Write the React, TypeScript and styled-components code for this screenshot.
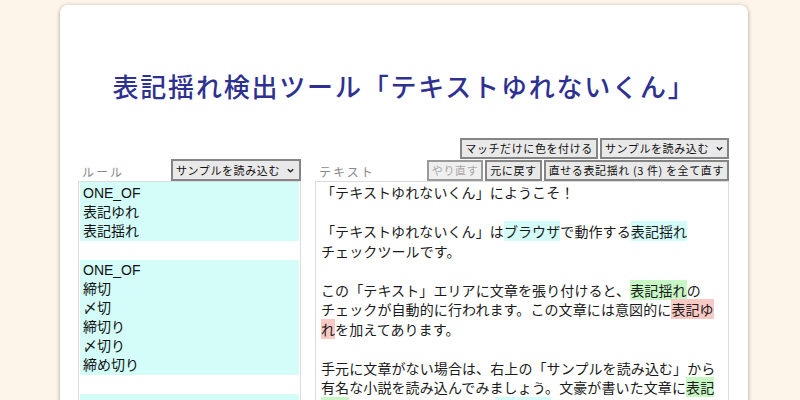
import React from "react";
import styled, { createGlobalStyle } from "styled-components";

const Global = createGlobalStyle`
  html, body { margin: 0; padding: 0; background: #fdf4ea; overflow: hidden; }
  body { font-family: "Liberation Sans", "Noto Sans CJK JP", sans-serif; }
`;

const Page = styled.div`
  padding-top: 5px;
  height: 395px;
  overflow: hidden;
`;

const Card = styled.div`
  margin-left: 60px;
  width: 688px;
  height: 420px;
  background: #fff;
  border-radius: 8px;
  box-shadow: 0 1px 4px rgba(0, 0, 0, 0.35);
`;

const Title = styled.h1`
  margin: 0;
  padding-top: 63px;
  text-align: center;
  font-family: "Noto Sans CJK JP", sans-serif;
  font-weight: 500;
  font-size: 26px;
  line-height: 36px;
  letter-spacing: 1.8px;
  color: #2e3192;
  padding-right: 0;
`;

const Columns = styled.div`
  display: grid;
  grid-template-columns: 223px 414px;
  column-gap: 14px;
  padding-left: 18px;
  margin-top: 34px;
`;

const Column = styled.div`
  display: flex;
  flex-direction: column;
`;

const Header = styled.div`
  height: 43px;
  display: flex;
  align-items: flex-end;
  justify-content: space-between;
`;

const Label = styled.span`
  font-family: "Noto Sans CJK JP", sans-serif;
  font-size: 12px;
  color: #8a8a8a;
  letter-spacing: 2px;
  padding: 0 0 0 4px;
  line-height: 18px;
`;

const ButtonStack = styled.div`
  display: flex;
  flex-direction: column;
  align-items: flex-end;
  gap: 1px;
`;

const ButtonRow = styled.div`
  display: flex;
  gap: 2px;
`;

const Button = styled.button<{ $disabled?: boolean }>`
  box-sizing: border-box;
  height: 21px;
  margin: 0;
  padding: 0 3px;
  font-family: "Noto Sans CJK JP", sans-serif;
  font-size: 11px;
  letter-spacing: 0.6px;
  line-height: 17px;
  color: ${(p) => (p.$disabled ? "#a8a8a8" : "#111")};
  background: ${(p) => (p.$disabled ? "#efefef" : "#e9e9e9")};
  border: 2px solid ${(p) => (p.$disabled ? "#9a9a9a" : "#858585")};
  display: flex;
  align-items: center;
  white-space: nowrap;
`;

const SelectBox = styled(Button)`
  height: 22px;
  padding: 0 4px 0 3px;
`;

const Chevron = () => (
  <svg width="9" height="9" viewBox="0 0 10 10" style={{ marginLeft: 6 }}>
    <path d="M2 3.5 L5 6.5 L8 3.5" fill="none" stroke="#222" strokeWidth="1.6" />
  </svg>
);

const RulesPanel = styled.div`
  box-sizing: border-box;
  height: 230px;
  border: 1px solid #dcdcdc;
  border-bottom: none;
  padding: 0 1px;
  font-size: 14px;
  color: #111;
`;

const RuleGroup = styled.div`
  background: #d4fcf8;
  padding: 1.5px 3px 0;
`;

const RuleLine = styled.div`
  line-height: 19px;
  height: 19px;
  white-space: nowrap;
`;

const Blank = styled.div`
  height: 19px;
`;

const TextPanel = styled.div`
  box-sizing: border-box;
  height: 230px;
  border: 1px solid #dcdcdc;
  border-bottom: none;
  padding: 1px 5px 0;
  font-family: "Noto Sans CJK JP", sans-serif;
  font-size: 14px;
  letter-spacing: 0.1px;
  color: #1a1a1a;
`;

const TextLine = styled.div`
  line-height: 19.5px;
  height: 19.5px;
  white-space: nowrap;
`;

const Mark = styled.span<{ $kind: "cyan" | "green" | "red" }>`
  background: ${(p) =>
    p.$kind === "cyan" ? "#d4fcf8" : p.$kind === "green" ? "#c8f7c5" : "#f9c9c3"};
`;

const rules: string[][] = [
  ["ONE_OF", "表記ゆれ", "表記揺れ"],
  ["ONE_OF", "締切", "〆切", "締切り", "〆切り", "締め切り"],
  ["ONE_OF", "見かけ", "見掛け"],
];

export default function App() {
  return (
    <>
      <Global />
      <Page>
        <Card>
          <Title>表記揺れ検出ツール「テキストゆれないくん」</Title>
          <Columns>
            <Column>
              <Header>
                <Label>ルール</Label>
                <SelectBox>
                  サンプルを読み込む
                  <Chevron />
                </SelectBox>
              </Header>
              <RulesPanel>
                {rules.map((g, i) => (
                  <React.Fragment key={i}>
                    {i > 0 && <Blank />}
                    <RuleGroup>
                      {g.map((l, j) => (
                        <RuleLine key={j}>{l}</RuleLine>
                      ))}
                    </RuleGroup>
                  </React.Fragment>
                ))}
              </RulesPanel>
            </Column>
            <Column>
              <Header>
                <Label>テキスト</Label>
                <ButtonStack>
                  <ButtonRow>
                    <Button>マッチだけに色を付ける</Button>
                    <Button>
                      サンプルを読み込む
                      <Chevron />
                    </Button>
                  </ButtonRow>
                  <ButtonRow>
                    <Button $disabled>やり直す</Button>
                    <Button>元に戻す</Button>
                    <Button>直せる表記揺れ (3 件) を全て直す</Button>
                  </ButtonRow>
                </ButtonStack>
              </Header>
              <TextPanel>
                <TextLine>「テキストゆれないくん」にようこそ！</TextLine>
                <TextLine />
                <TextLine>
                  「テキストゆれないくん」は<Mark $kind="cyan">ブラウザ</Mark>で動作する
                  <Mark $kind="cyan">表記揺れ</Mark>
                </TextLine>
                <TextLine>チェックツールです。</TextLine>
                <TextLine />
                <TextLine>
                  この「テキスト」エリアに文章を張り付けると、<Mark $kind="green">表記揺れ</Mark>の
                </TextLine>
                <TextLine>
                  チェックが自動的に行われます。この文章には意図的に<Mark $kind="red">表記ゆ</Mark>
                </TextLine>
                <TextLine>
                  <Mark $kind="red">れ</Mark>を加えてあります。
                </TextLine>
                <TextLine />
                <TextLine>手元に文章がない場合は、右上の「サンプルを読み込む」から</TextLine>
                <TextLine>
                  有名な小説を読み込んでみましょう。文豪が書いた文章に<Mark $kind="green">表記</Mark>
                </TextLine>
                <TextLine>
                  <Mark $kind="green">揺れ</Mark>はあるのでしょうか？(<Mark $kind="cyan">ネタバレ</Mark>: 結構ある)
                </TextLine>
              </TextPanel>
            </Column>
          </Columns>
        </Card>
      </Page>
    </>
  );
}
